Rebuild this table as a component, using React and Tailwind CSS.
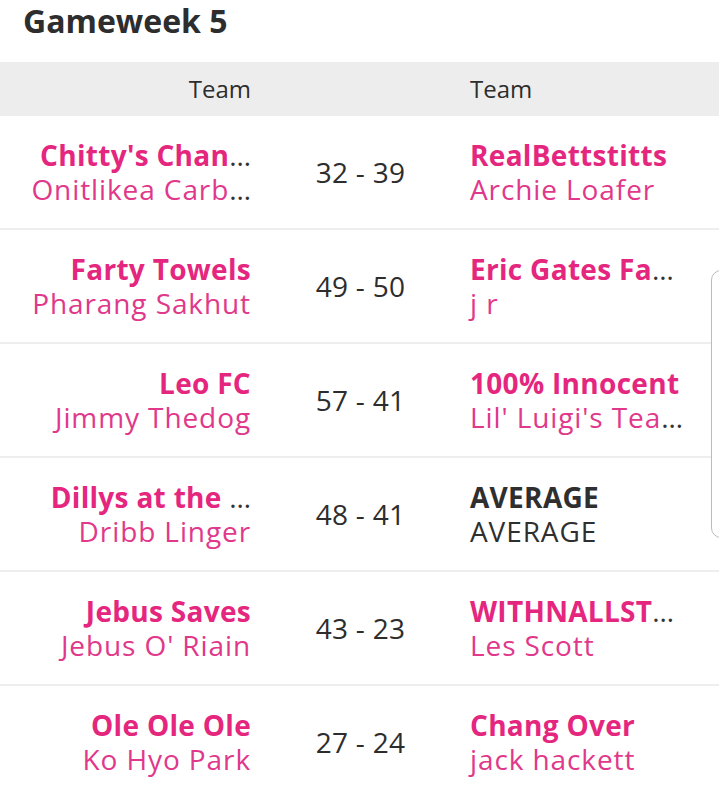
import React from "react";

const fixtures = [
  { home: "Chitty's Chan", homeCut: true, homeMgr: "Onitlikea Carb", homeMgrCut: true, score: "32 - 39", away: "RealBettstitts", awayMgr: "Archie Loafer" },
  { home: "Farty Towels", homeMgr: "Pharang Sakhut", score: "49 - 50", away: "Eric Gates Fa", awayCut: true, awayMgr: "j r" },
  { home: "Leo FC", homeMgr: "Jimmy Thedog", score: "57 - 41", away: "100% Innocent", awayMgr: "Lil' Luigi's Tea", awayMgrCut: true },
  { home: "Dillys at the ", homeCut: true, homeMgr: "Dribb Linger", score: "48 - 41", away: "AVERAGE", awayMgr: "AVERAGE", awayPlain: true },
  { home: "Jebus Saves", homeMgr: "Jebus O' Riain", score: "43 - 23", away: "WITHNALLST", awayCut: true, awayMgr: "Les Scott" },
  { home: "Ole Ole Ole", homeMgr: "Ko Hyo Park", score: "27 - 24", away: "Chang Over", awayMgr: "jack hackett" },
];

function Dots({ show }) {
  if (!show) return null;
  return <span className="text-[#333] font-normal tracking-normal">…</span>;
}

function Side({ name, cut, mgr, mgrCut, plain, align }) {
  return (
    <div className={`flex flex-col whitespace-nowrap ${align}`}>
      <div className={`text-[28px] leading-[34px] font-bold tracking-[0.3px] ${plain ? "text-[#2f2f2f]" : "text-[#e5267e]"}`}>
        {name}
        <Dots show={cut} />
      </div>
      <div className={`text-[28px] leading-[34px] tracking-[0.9px] ${plain ? "text-[#2f2f2f]" : "text-[#e0388a]"}`}>
        {mgr}
        <Dots show={mgrCut} />
      </div>
    </div>
  );
}

export default function App() {
  return (
    <div
      className="relative w-[719px] h-[798px] overflow-hidden bg-white"
      style={{ fontFamily: '"Open Sans", "Noto Sans", sans-serif' }}
    >
      {/* Title */}
      <h1 className="px-[23px] pt-[1px] h-[62px] text-[32px] leading-[40px] font-bold text-[#2d2d2d]">
        Gameweek 5
      </h1>

      {/* Column header */}
      <div className="flex items-center h-[54px] px-[23px] bg-[#ededed] text-[24px] text-[#2d2d2d]">
        <div className="w-[228px] text-right">Team</div>
        <div className="flex-1" />
        <div className="w-[226px]">Team</div>
      </div>

      {/* Fixtures */}
      {fixtures.map((f, i) => (
        <div key={i} className="flex items-center h-[114px] px-[23px] border-b-2 border-[#eeeeee]">
          <div className="w-[228px]">
            <Side name={f.home} cut={f.homeCut} mgr={f.homeMgr} mgrCut={f.homeMgrCut} align="items-end text-right" />
          </div>
          <div className="flex-1 text-center text-[28px] tracking-[0.3px] text-[#2d2d2d]">{f.score}</div>
          <div className="w-[226px]">
            <Side
              name={f.away}
              cut={f.awayCut}
              mgr={f.awayMgr}
              mgrCut={f.awayMgrCut}
              plain={f.awayPlain}
              align="items-start text-left"
            />
          </div>
        </div>
      ))}

      {/* scroll indicator */}
      <div className="absolute left-[711px] top-[270px] w-[30px] h-[268px] rounded-[10px] border border-[#bbbbbb] bg-white" />
    </div>
  );
}
